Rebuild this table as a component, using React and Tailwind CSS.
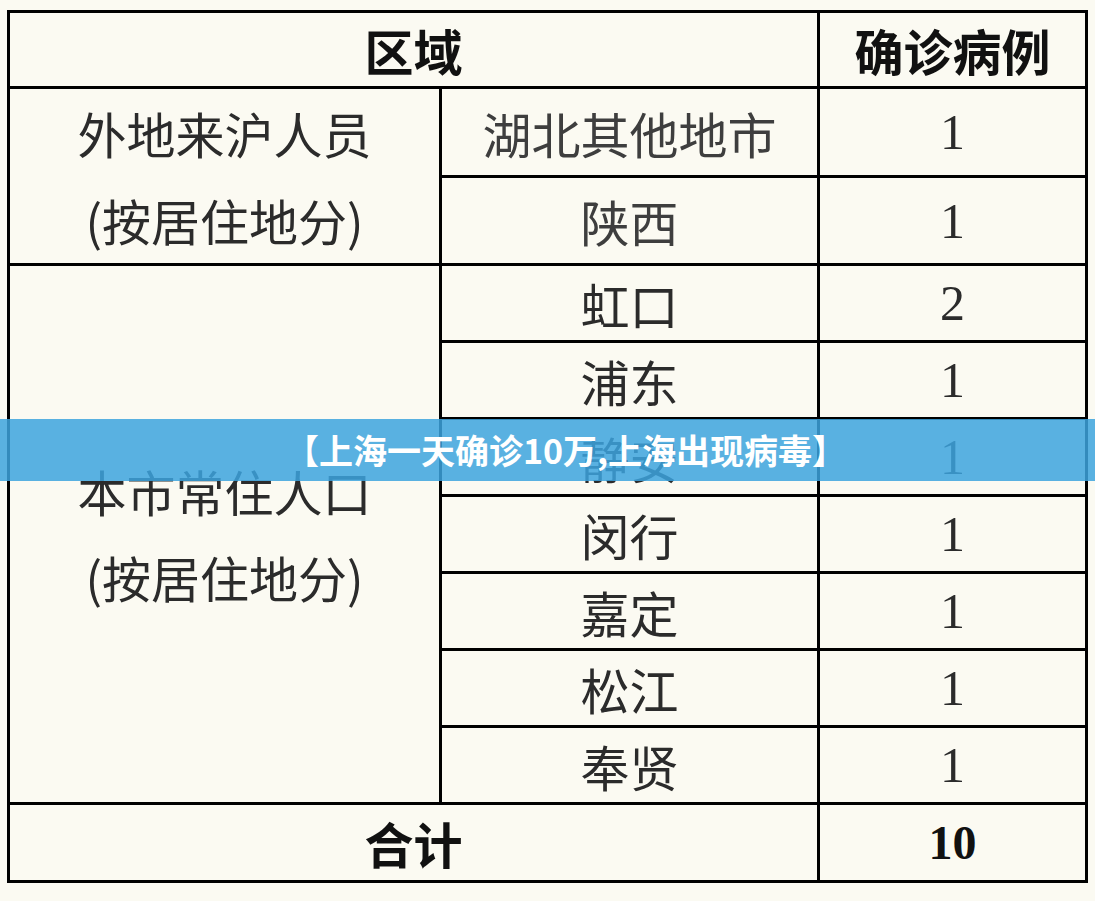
export default function App() {
  const cjk = { fontFamily: '"Noto Sans CJK SC", "Noto Sans", sans-serif' };
  const serif = { fontFamily: '"Liberation Serif", "Times New Roman", serif' };

  const local = ["虹口", "浦东", "静安", "闵行", "嘉定", "松江", "奉贤"];
  const cell = "border-[3px] border-black p-0 text-center align-middle leading-none";

  return (
    <div className="relative w-[1095px] h-[901px] bg-[#fbfaf2] overflow-hidden">
      <div className="pt-[10px] pl-[7px]">
        <table className="table-fixed border-collapse w-[1078px]">
          <colgroup>
            <col className="w-[432px]" />
            <col className="w-[378px]" />
            <col className="w-[268px]" />
          </colgroup>
          <tbody>
            {/* header */}
            <tr className="h-[76px]">
              <td colSpan={2} className={cell}>
                <span style={cjk} className="text-[49px] font-bold text-[#111] leading-none">区域</span>
              </td>
              <td className={cell}>
                <span style={cjk} className="text-[49px] font-bold text-[#111] leading-none">确诊病例</span>
              </td>
            </tr>

            {/* 外地来沪 */}
            <tr className="h-[89px]">
              <td rowSpan={2} className={cell}>
                <div style={cjk} className="text-[49px] text-[#2b2b2b] leading-[87px]">
                  <div>外地来沪人员</div>
                  <div>(按居住地分)</div>
                </div>
              </td>
              <td className={cell}>
                <span style={cjk} className="text-[49px] text-[#3e3e3e] leading-none">湖北其他地市</span>
              </td>
              <td className={cell}>
                <span style={serif} className="text-[50px] text-[#2b2b2b] leading-none">1</span>
              </td>
            </tr>
            <tr className="h-[88px]">
              <td className={cell}>
                <span style={cjk} className="text-[49px] text-[#3e3e3e] leading-none">陕西</span>
              </td>
              <td className={cell}>
                <span style={serif} className="text-[50px] text-[#2b2b2b] leading-none">1</span>
              </td>
            </tr>

            {/* 本市常住 */}
            {local.map((name, i) => (
              <tr key={name} className="h-[77px]">
                {i === 0 && (
                  <td rowSpan={7} className={cell}>
                    <div style={cjk} className="text-[49px] text-[#2b2b2b] leading-[86px]">
                      <div>本市常住人口</div>
                      <div>(按居住地分)</div>
                    </div>
                  </td>
                )}
                <td className={cell}>
                  <span style={cjk} className="text-[49px] text-[#2b2b2b] leading-none">{name}</span>
                </td>
                <td className={cell}>
                  <span style={serif} className="text-[50px] text-[#2b2b2b] leading-none">{name === "虹口" ? 2 : 1}</span>
                </td>
              </tr>
            ))}

            {/* 合计 */}
            <tr className="h-[78px]">
              <td colSpan={2} className={cell}>
                <span style={cjk} className="text-[49px] font-bold text-[#111] leading-none">合计</span>
              </td>
              <td className={cell}>
                <span style={serif} className="text-[48px] font-bold text-[#111] leading-none">10</span>
              </td>
            </tr>
          </tbody>
        </table>
      </div>

      {/* title banner */}
      <div className="absolute left-0 right-0 top-[419px] h-[62px] bg-[rgba(60,163,222,0.85)] flex items-center justify-center pl-[36px]">
        <span style={cjk} className="text-[34px] font-bold text-white leading-none">【上海一天确诊10万,上海出现病毒】</span>
      </div>
    </div>
  );
}
